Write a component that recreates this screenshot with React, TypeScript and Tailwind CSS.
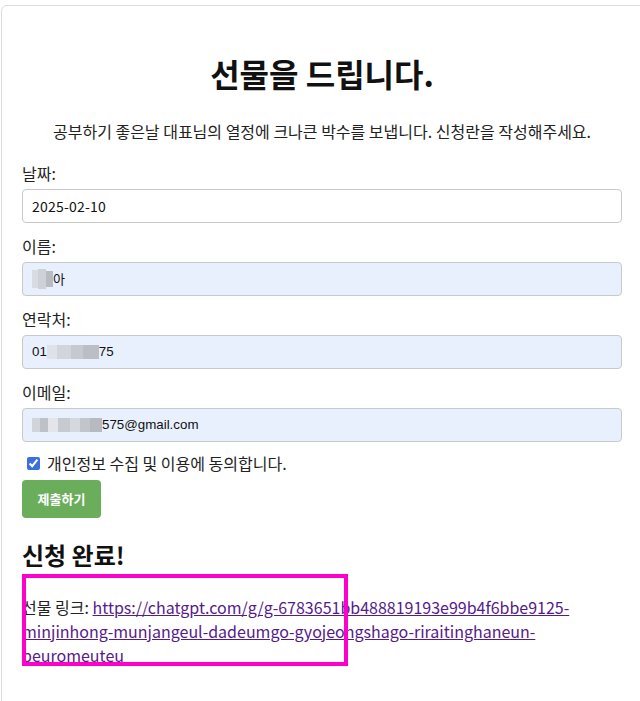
import type { ReactNode } from 'react';

const KR = "font-['Noto_Sans_CJK_KR','Noto_Sans',sans-serif]";

// pixelated privacy mask blocks
function Mosaic({ cells }: { cells: { w: number; c: string; h?: number }[] }) {
  return (
    <span className="inline-flex h-[20px] items-center align-middle">
      {cells.map((cell, i) => (
        <span
          key={i}
          className="inline-block"
          style={{ width: cell.w, height: cell.h ?? 14, background: cell.c }}
        />
      ))}
    </span>
  );
}

function Field({
  label,
  filled,
  children,
}: {
  label: string;
  filled?: boolean;
  children: ReactNode;
}) {
  return (
    <div className="flex flex-col">
      <label className={`${KR} h-[24px] text-[16px] leading-[24px] text-[#222]`}>{label}</label>
      <div
        className={`mt-1 flex h-[34px] items-center rounded-[4px] border border-[#c9c9c9] px-[9px] ${
          filled ? 'bg-[#e8f0fe]' : 'bg-white'
        }`}
      >
        {children}
      </div>
    </div>
  );
}

export default function App() {
  return (
    <div className="relative h-[701px] w-[640px] overflow-hidden bg-white">
      <div className="ml-px mt-[5px] w-[680px] rounded-[6px] border border-[#dcdcdc] bg-white pl-5 pt-[45px] pb-10">
        <div className="flex w-[600px] flex-col">
          <h1 className={`${KR} text-center text-[32px] font-bold leading-[44px] text-[#111]`}>
            선물을 드립니다.
          </h1>
          <p className={`${KR} mt-[24px] text-center text-[16px] leading-[24px] text-[#222]`}>
            공부하기 좋은날 대표님의 열정에 크나큰 박수를 보냅니다. 신청란을 작성해주세요.
          </p>

          <div className="mt-[18px] flex flex-col gap-[11px]">
            <Field label="날짜:">
              <span className={`${KR} text-[14px] tracking-[0.2px] text-[#111]`}>2025-02-10</span>
            </Field>
            <Field label="이름:" filled>
              <Mosaic
                cells={[
                  { w: 6, c: '#d9dbe2', h: 18 },
                  { w: 8, c: '#cfd1d8', h: 20 },
                  { w: 7, c: '#b9bbc2', h: 16 },
                ]}
              />
              <span className={`${KR} text-[13px] text-[#111]`}>아</span>
            </Field>
            <Field label="연락처:" filled>
              <span className="font-['Liberation_Sans',Arial,sans-serif] text-[13.33px] text-[#111]">01</span>
              <Mosaic
                cells={[
                  { w: 10, c: '#e0e2e8' },
                  { w: 14, c: '#d3d5dc' },
                  { w: 12, c: '#c7c9d0' },
                  { w: 16, c: '#bcbec5' },
                ]}
              />
              <span className="font-['Liberation_Sans',Arial,sans-serif] text-[13.33px] text-[#111]">75</span>
            </Field>
            <Field label="이메일:" filled>
              <Mosaic
                cells={[
                  { w: 8, c: '#d2d4db' },
                  { w: 8, c: '#bfc1c8' },
                  { w: 10, c: '#e3e5ea' },
                  { w: 12, c: '#c8cad1' },
                  { w: 10, c: '#d6d8df' },
                  { w: 10, c: '#c3c5cc' },
                  { w: 12, c: '#b8bac1' },
                ]}
              />
              <span className="font-['Liberation_Sans',Arial,sans-serif] text-[13.33px] text-[#111]">
                575@gmail.com
              </span>
            </Field>
          </div>

          <label className={`${KR} mt-[9px] flex h-[24px] items-center gap-[7px] pl-[5px] text-[16px] text-[#222]`}>
            <input
              type="checkbox"
              defaultChecked
              className="h-[13px] w-[13px] accent-[#3b6fe0]"
            />
            개인정보 수집 및 이용에 동의합니다.
          </label>

          <div className="mt-[5px]">
            <button
              type="button"
              className={`${KR} h-[38px] w-[79px] rounded-[4px] bg-[#6aad5a] text-[13px] font-bold text-white`}
            >
              제출하기
            </button>
          </div>

          <h2 className={`${KR} mt-[20px] text-[24px] font-bold leading-[34px] text-[#111]`}>
            신청 완료!
          </h2>
          <p className={`${KR} mt-[23px] w-[590px] break-words text-[16px] leading-[24px] text-[#222]`}>
            선물 링크:{' '}
            <a href="#" className="text-[#551a8b] underline">
              https://chatgpt.com/g/g-6783651bb488819193e99b4f6bbe9125-minjinhong-munjangeul-dadeumgo-gyojeongshago-riraitinghaneun-beuromeuteu
            </a>
          </p>
        </div>
      </div>

      {/* annotation box */}
      <div className="pointer-events-none absolute left-[22px] top-[574px] h-[92px] w-[326px] border-4 border-[#ff00cc]" />
    </div>
  );
}
